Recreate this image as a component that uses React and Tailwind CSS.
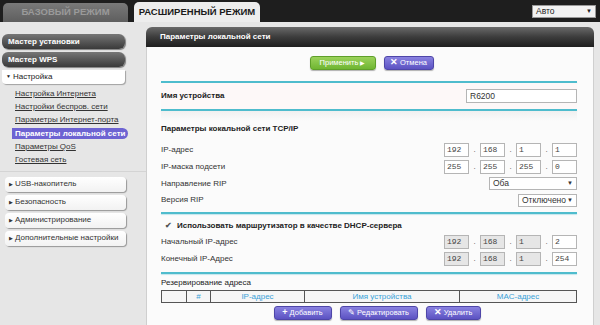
import { useState } from 'react';

const DarkItem = ({ children }) => (
  <div className="h-[15px] ml-[2px] w-[123px] rounded-[6px] bg-linear-to-b from-[#777] to-[#3a3a3a] text-white font-bold text-[8px] pl-[6px] flex items-center shadow-[1px_1px_1px_rgba(0,0,0,0.45)]">
    {children}
  </div>
);

const MenuItem = ({ children }) => (
  <div className="h-[15px] ml-[5px] w-[121px] rounded-[4px] bg-linear-to-b from-white to-[#f2f2f2] text-[#333] text-[8px] pl-[4px] flex items-center shadow-[1px_1px_1px_rgba(0,0,0,0.35)]">
    <span className="text-[5px] mr-[2px]">▶</span>
    {children}
  </div>
);

const subLinks = [
  'Настройка Интернета',
  'Настройки беспров. сети',
  'Параметры Интернет-порта',
  'Параметры локальной сети',
  'Параметры QoS',
  'Гостевая сеть',
];

const Sidebar = () => (
  <aside className="w-[146px] shrink-0 pt-[12px]">
    <div className="flex flex-col gap-[3px]">
      <DarkItem>Мастер установки</DarkItem>
      <DarkItem>Мастер WPS</DarkItem>
      <div className="h-[14px] ml-[2px] w-[123px] rounded-b-[4px] bg-white text-[#222] text-[8px] pl-[4px] flex items-center shadow-[1px_1px_1px_rgba(0,0,0,0.3)]">
        <span className="text-[5px] mr-[2px]">▼</span>Настройка
      </div>
    </div>
    <ul className="pt-[3px] pb-[4px] border-b border-[#d4d4d4]">
      {subLinks.map((s, i) => (
        <li key={s} className="h-[13.3px] flex items-center">
          {i === 3 ? (
            <span className="ml-[12px] w-[116px] h-[11px] rounded-r-full rounded-l-[3px] bg-[#6d63d2] text-white font-bold text-[8px] pl-[3px] flex items-center">
              {s}
            </span>
          ) : (
            <span className="ml-[15px] text-[8px] text-[#333] underline">{s}</span>
          )}
        </li>
      ))}
    </ul>
    <div className="flex flex-col gap-[3px] pt-[5px]">
      <MenuItem>USB-накопитель</MenuItem>
      <MenuItem>Безопасность</MenuItem>
      <MenuItem>Администрирование</MenuItem>
      <MenuItem>Дополнительные настройки</MenuItem>
    </div>
  </aside>
);

const Box = ({ value, gray }) => (
  <div
    className={`w-[25px] h-[14px] border border-[#b5b5b5] font-['Liberation_Mono',monospace] text-[8px] text-[#444] pl-[2px] flex items-center ${
      gray ? 'bg-[#e6e6e6]' : 'bg-white'
    }`}
  >
    {value}
  </div>
);

const IpInputs = ({ parts, grayCount = 0 }) => (
  <div className="flex items-center">
    {parts.map((p, i) => (
      <div key={i} className="flex items-center">
        {i > 0 && <span className="w-[11px] text-center text-[8px] text-[#555]">.</span>}
        <Box value={p} gray={i < grayCount} />
      </div>
    ))}
  </div>
);

const Select = ({ value, w }) => (
  <div className={`${w} h-[13px] border border-[#b5b5b5] bg-white text-[8.5px] text-[#333] pl-[3px] pr-[3px] flex items-center justify-between`}>
    <span>{value}</span>
    <span className="text-[6px]">▼</span>
  </div>
);

const Row = ({ label, children, h = 'h-[17px]' }) => (
  <div className={`${h} flex items-center justify-between`}>
    <span className="text-[8px] text-[#333]">{label}</span>
    {children}
  </div>
);

const Line = () => <div className="h-[2px] bg-[#4fbccd] shadow-[0_1px_1px_rgba(69,183,201,0.3)]" />;

const Btn = ({ color, children, w }) => (
  <button
    className={`${w} h-[14px] rounded-[3px] text-white text-[7.5px] flex items-center justify-center gap-[2px] shadow-[0_1px_1px_rgba(0,0,0,0.3)] ${color}`}
  >
    {children}
  </button>
);

const purple = 'bg-linear-to-b from-[#8a82e0] to-[#5c52c2] border border-[#4e46a8]';

const Panel = () => (
  <main className="w-[448px] mt-[5px] flex flex-col">
    <div className="h-[20px] rounded-t-[6px] bg-linear-to-b from-[#6a6a6a] via-[#3c3c3c] to-[#1f1f1f] text-white font-bold text-[8px] pl-[14px] flex items-center">
      Параметры локальной сети
    </div>
    <div className="bg-[#fbfbfb] border-l border-r border-[#cfcfcf] h-[300px] pl-[14px] pr-[16px]">
      <div className="flex justify-center gap-[8px] pt-[9px] pl-[5px]">
        <Btn w="w-[66px]" color="bg-linear-to-b from-[#9bd25a] to-[#6fb631] border border-[#5f9f2a]">
          Применить <span className="text-[6px]">▶</span>
        </Btn>
        <Btn w="w-[50px]" color={purple}>
          <span className="font-bold text-[9px]">✕</span>Отмена
        </Btn>
      </div>
      <div className="mt-[11px]">
        <Line />
        <div className="h-[26px] bg-[#fdf8f8] flex items-center justify-between">
          <span className="text-[8px] font-bold text-[#222]">Имя устройства</span>
          <div className="w-[111px] h-[14px] border border-[#b5b5b5] bg-white text-[8.5px] text-[#333] pl-[3px] flex items-center">
            R6200
          </div>
        </div>
        <Line />
      </div>
      <div className="h-[10px] bg-linear-to-b from-[#f0f0f0] to-[#fbfbfb]" />
      <div className="h-[16px] flex items-center text-[8px] font-bold text-[#222]">Параметры кокальной сети TCP/IP</div>
      <div className="pt-[4px]">
        <Row label="IP-адрес">
          <IpInputs parts={['192', '168', '1', '1']} />
        </Row>
        <Row label="IP-маска подсети">
          <IpInputs parts={['255', '255', '255', '0']} />
        </Row>
        <Row label="Направление RIP">
          <Select value="Оба" w="w-[88px]" />
        </Row>
        <Row label="Версия RIP" h="h-[16px]">
          <Select value="Отключено" w="w-[59px]" />
        </Row>
      </div>
      <div className="pt-[4px]">
        <Line />
      </div>
      <div className="h-[14px] mt-[5px] flex items-center text-[8px] font-bold text-[#222]">
        <span className="ml-[4px] mr-[5px] text-[8px] text-[#555]">✔</span>
        Использовать маршрутизатор в качестве DHCP-сервера
      </div>
      <Row label="Начальный IP-адрес" h="h-[17px]">
        <IpInputs parts={['192', '168', '1', '2']} grayCount={3} />
      </Row>
      <Row label="Конечный IP-Адрес" h="h-[18px]">
        <IpInputs parts={['192', '168', '1', '254']} grayCount={3} />
      </Row>
      <div className="pt-[4px]">
        <Line />
      </div>
      <div className="h-[15px] flex items-end text-[8px] text-[#222]">Резервирование адреса</div>
      <div className="mt-[1px] h-[13px] grid grid-cols-[25px_24px_94px_155px_1fr] border border-[#555] bg-[#f6f6f6] text-[8px] text-[#3aa2d8]">
        <div className="border-r border-[#555]" />
        <div className="border-r border-[#555] flex items-center justify-center">#</div>
        <div className="border-r border-[#555] flex items-center justify-center">IP-адрес</div>
        <div className="border-r border-[#555] flex items-center justify-center">Имя устройства</div>
        <div className="flex items-center justify-center">MAC-адрес</div>
      </div>
      <div className="flex justify-center gap-[8px] pt-[3px] pl-[16px]">
        <Btn w="w-[58px]" color={purple}>
          <span className="font-bold text-[9px]">+</span>Добавить
        </Btn>
        <Btn w="w-[78px]" color={purple}>
          <span className="text-[8px]">✎</span> Редактировать
        </Btn>
        <Btn w="w-[55px]" color={purple}>
          <span className="font-bold text-[9px]">✕</span> Удалить
        </Btn>
      </div>
    </div>
  </main>
);

export default function App() {
  const [mode] = useState('adv');
  return (
    <div className="w-[600px] h-[325px] overflow-hidden bg-[#e6e6e6] font-['Liberation_Sans',Arial,sans-serif]">
      <header className="h-[22px] bg-[#1e1e1e] flex items-end pl-[3px] pr-[4px]">
        <div className="w-[125px] h-[19px] rounded-t-[5px] bg-linear-to-b from-[#7a7a7a] to-[#5e5e5e] text-[#9a9a9a] font-bold text-[9.5px] flex items-center justify-center">
          БАЗОВЫЙ РЕЖИМ
        </div>
        <div
          className={`w-[126px] h-[20px] ml-[6px] rounded-t-[5px] bg-[#ededed] text-[#1a1a1a] font-bold text-[9.5px] flex items-center justify-center ${
            mode === 'adv' ? '' : 'opacity-50'
          }`}
        >
          РАСШИРЕННЫЙ РЕЖИМ
        </div>
        <div className="ml-auto self-center w-[64px] h-[13px] bg-[#f2f2f2] border border-[#999] text-[8.5px] text-[#222] pl-[3px] pr-[3px] flex items-center justify-between">
          <span>Авто</span>
          <span className="text-[6px]">▼</span>
        </div>
      </header>
      <div className="flex">
        <Sidebar />
        <Panel />
      </div>
    </div>
  );
}
